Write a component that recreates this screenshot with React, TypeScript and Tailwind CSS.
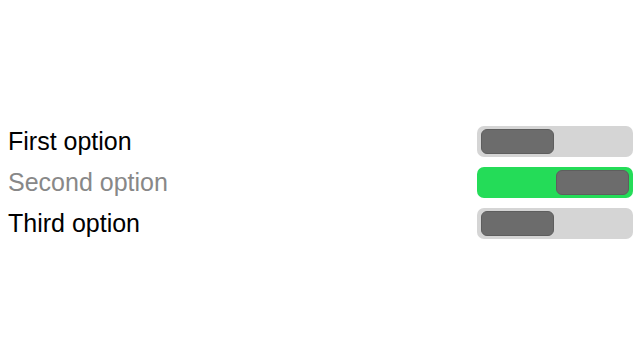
import React from 'react';

const options = [
  { label: 'First option', on: false, muted: false },
  { label: 'Second option', on: true, muted: true },
  { label: 'Third option', on: false, muted: false },
];

const Toggle: React.FC<{ on: boolean }> = ({ on }) => (
  <div
    className={`flex w-[156px] h-[31px] rounded-[7px] p-[3px] px-[4px] ${
      on ? 'bg-[#24dc58] justify-end' : 'bg-[#d5d5d5] justify-start'
    }`}
  >
    <div className="w-[73px] h-full rounded-[6px] bg-[#6c6c6c] border border-[#5e5e5e]" />
  </div>
);

export default function App() {
  return (
    <div
      className="h-[360px] w-full bg-white flex flex-col justify-center pt-[4px]"
      style={{ fontFamily: '"Liberation Sans", Arial, sans-serif' }}
    >
      {options.map((o) => (
        <div key={o.label} className="flex items-center justify-between h-[41px] pl-[8px] pr-[7px]">
          <span className={`text-[25px] leading-none ${o.muted ? 'text-[#888888]' : 'text-black'}`}>
            {o.label}
          </span>
          <Toggle on={o.on} />
        </div>
      ))}
    </div>
  );
}
